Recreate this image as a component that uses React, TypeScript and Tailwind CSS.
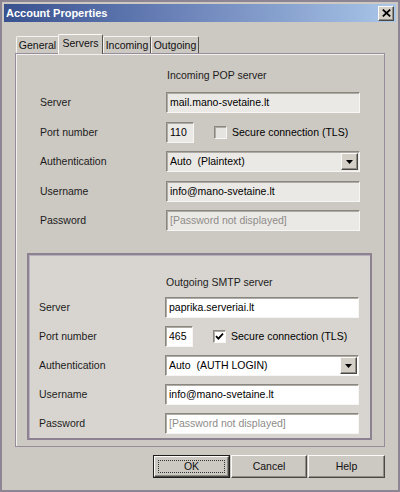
const sunken =
  "border border-t-[#8a8781] border-l-[#8a8781] border-b-[#f7f6f4] border-r-[#f7f6f4] shadow-[inset_1px_1px_0_#aeaba5]";
const raised =
  "border border-t-[#fbfaf8] border-l-[#fbfaf8] border-b-[#4a4844] border-r-[#4a4844] shadow-[inset_-1px_-1px_0_#8f8b85]";

type FieldProps = { value: string; white?: boolean; muted?: boolean; width?: string };

const Field = ({ value, white, muted, width = "w-[194px]" }: FieldProps) => (
  <div
    className={`flex h-[21px] ${width} items-center px-[3px] ${sunken} ${white ? "bg-white" : "bg-[#ebe9e5]"} ${
      muted ? "text-[#8e8c89]" : "text-black"
    }`}
  >
    <span className="whitespace-nowrap">{value}</span>
  </div>
);

const Select = ({ value, white }: { value: string; white?: boolean }) => (
  <div className={`flex h-[21px] w-[194px] items-center pl-[3px] pr-px ${sunken} ${white ? "bg-white" : "bg-[#ebe9e5]"}`}>
    <span className="flex-1 whitespace-pre text-black">{value}</span>
    <div className={`flex h-[17px] w-[17px] items-center justify-center bg-[#d4d0c8] ${raised}`}>
      <svg width="7" height="4" viewBox="0 0 7 4">
        <path d="M0 0h7L3.5 4z" fill="#000" />
      </svg>
    </div>
  </div>
);

const PortRow = ({ port, checked, white }: { port: string; checked?: boolean; white?: boolean }) => (
  <div className="flex items-center">
    <Field value={port} white={white} width="w-[28px]" />
    <div
      className={`ml-[20px] flex h-[13px] w-[13px] items-center justify-center ${sunken} ${white ? "bg-white" : "bg-[#e6e4e0]"}`}
    >
      {checked && (
        <svg width="9" height="9" viewBox="0 0 9 9">
          <path d="M1 4.2l2.4 2.4L8 1.6" stroke="#000" strokeWidth="1.8" fill="none" />
        </svg>
      )}
    </div>
    <span className="ml-[5px] whitespace-nowrap text-black">Secure connection (TLS)</span>
  </div>
);

type ServerProps = {
  title: string;
  server: string;
  port: string;
  auth: string;
  checked?: boolean;
  white?: boolean;
  gap: string;
  titleGap: string;
};

const ServerBlock = ({ title, server, port, auth, checked, white, gap, titleGap }: ServerProps) => (
  <div>
    <div className={`h-[14px] pl-[127px] leading-[14px] text-[#1c1c1c] ${titleGap}`}>{title}</div>
    <div className={`grid grid-cols-[126px_194px] items-center ${gap}`}>
      <span className="text-[#1c1c1c]">Server</span>
      <Field value={server} white={white} />
      <span className="text-[#1c1c1c]">Port number</span>
      <PortRow port={port} checked={checked} white={white} />
      <span className="text-[#1c1c1c]">Authentication</span>
      <Select value={auth} white={white} />
      <span className="text-[#1c1c1c]">Username</span>
      <Field value="info@mano-svetaine.lt" white={white} />
      <span className="text-[#1c1c1c]">Password</span>
      <Field value="[Password not displayed]" white={white} muted />
    </div>
  </div>
);

const tabs = [
  { label: "General", w: "w-[43px]" },
  { label: "Servers", w: "w-[45px]", active: true },
  { label: "Incoming", w: "w-[48px]" },
  { label: "Outgoing", w: "w-[48px]" },
];

export default function App() {
  return (
    <div className="flex h-[492px] w-[400px] flex-col border-2 border-[#8d8593] bg-[#ccc8c2] p-[2px] font-['Liberation_Sans',Arial,sans-serif] text-[10.5px] leading-none">
      <div className="flex h-[18px] items-center justify-between bg-gradient-to-r from-[#3a5190] via-[#7189bd] to-[#aac6e8] pl-[2px] pr-[2px]">
        <span className="text-[11px] font-bold text-white">Account Properties</span>
        <div className={`flex h-[15px] w-[16px] items-center justify-center bg-[#d4d0c8] ${raised}`}>
          <svg width="9" height="8" viewBox="0 0 9 8">
            <path d="M0.8 0.6l7.4 6.8M8.2 0.6l-7.4 6.8" stroke="#000" strokeWidth="1.8" />
          </svg>
        </div>
      </div>

      <div className="ml-[11px] mt-[12px] flex h-[19px] items-end pl-px">
        {tabs.map((t) =>
          t.active ? (
            <div
              key={t.label}
              className={`relative z-10 -mb-px -ml-px flex h-[20px] ${t.w} items-center justify-center rounded-t-[2px] border border-b-0 border-l-[#fbfaf8] border-r-[#55524e] border-t-[#fbfaf8] bg-[#ccc8c2] pb-[2px] text-[#111]`}
            >
              {t.label}
            </div>
          ) : (
            <div
              key={t.label}
              className={`flex h-[17px] ${t.w} items-center justify-center rounded-t-[2px] border border-b-0 border-l-[#f4f3f1] border-r-[#55524e] border-t-[#f4f3f1] text-[#111]`}
            >
              {t.label}
            </div>
          ),
        )}
      </div>

      <div className="ml-[11px] flex h-[394px] w-[370px] flex-col border border-[#968c9b] pt-[14px] shadow-[inset_1px_1px_0_#f2f1ef]">
        <div className="pl-[24px]">
          <ServerBlock
            title="Incoming POP server"
            server="mail.mano-svetaine.lt"
            port="110"
            auth="Auto  (Plaintext)"
            gap="gap-y-[8.5px]"
            titleGap="mb-[10px]"
          />
        </div>

        <div className="ml-[11px] mt-[22px] h-[187px] w-[345px] border-2 border-[#8c8292] bg-[#d8d5d0] pl-[10px] pt-[20px] shadow-[inset_1px_1px_0_#b9b0bc]">
          <ServerBlock
            title="Outgoing SMTP server"
            server="paprika.serveriai.lt"
            port="465"
            auth="Auto  (AUTH LOGIN)"
            checked
            white
            gap="gap-y-[8px]"
            titleGap="mb-[8px]"
          />
        </div>
      </div>

      <div className="ml-[11px] mt-[8px] flex w-[370px] justify-end gap-px">
        <div className="flex h-[23px] w-[77px] border border-[#1e1e1e] bg-[#ccc8c2]">
          <div className={`flex flex-1 p-[3px] ${raised}`}>
            <div className="flex flex-1 items-center justify-center border border-dotted border-[#333] text-[#111]">OK</div>
          </div>
        </div>
        <div className={`flex h-[23px] w-[76px] items-center justify-center bg-[#ccc8c2] text-[#111] ${raised}`}>Cancel</div>
        <div className={`flex h-[23px] w-[77px] items-center justify-center bg-[#ccc8c2] text-[#111] ${raised}`}>Help</div>
      </div>
    </div>
  );
}
